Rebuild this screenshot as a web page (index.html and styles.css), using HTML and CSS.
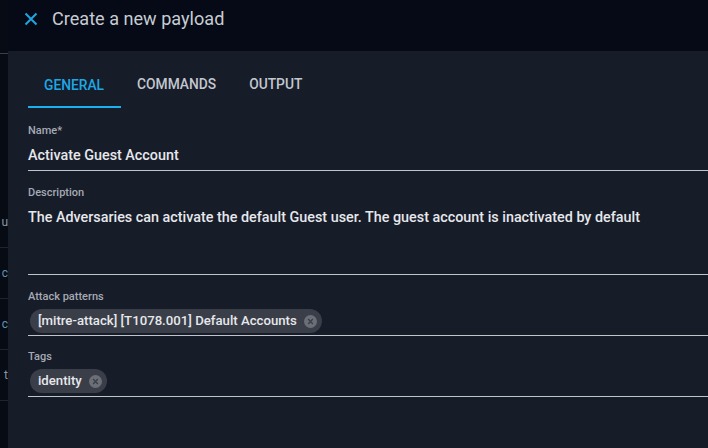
FILE: index.html
```html
<!DOCTYPE html>
<html>
<head>
<meta charset="utf-8">
<link rel="stylesheet" href="styles.css">
</head>
<body>
<div class="app">
  <aside class="behind">
    <div class="brow"></div>
    <div class="brow-gap"></div>
    <div class="brow"><span>u</span></div>
    <div class="brow"><span class="blue">c</span></div>
    <div class="brow"><span class="blue">c</span></div>
    <div class="brow"><span>t</span></div>
  </aside>
  <main class="drawer">
    <header class="head">
      <svg class="close" width="14" height="14" viewBox="0 0 14 14"><path d="M1.5 1.5L12.5 12.5M12.5 1.5L1.5 12.5" stroke="#1ea5e0" stroke-width="2" stroke-linecap="butt"/></svg>
      <h1 class="title">Create a new payload</h1>
    </header>
    <section class="content">
      <nav class="tabs">
        <div class="tab active">GENERAL</div>
        <div class="tab">COMMANDS</div>
        <div class="tab">OUTPUT</div>
      </nav>
      <div class="field">
        <label class="lbl">Name*</label>
        <div class="val">Activate Guest Account</div>
      </div>
      <div class="field">
        <label class="lbl">Description</label>
        <div class="val multi">The Adversaries can activate the default Guest user. The guest account is inactivated by default</div>
      </div>
      <div class="field">
        <label class="lbl">Attack patterns</label>
        <div class="val chips"><span class="chip">[mitre-attack] [T1078.001] Default Accounts<span class="x"><svg width="13" height="13" viewBox="0 0 12 12"><circle cx="6" cy="6" r="6" fill="#6b6f78"/><path d="M3.8 3.8L8.2 8.2M8.2 3.8L3.8 8.2" stroke="#3b3f48" stroke-width="1.3"/></svg></span></span></div>
      </div>
      <div class="field last">
        <label class="lbl">Tags</label>
        <div class="val chips"><span class="chip">identity<span class="x"><svg width="13" height="13" viewBox="0 0 12 12"><circle cx="6" cy="6" r="6" fill="#6b6f78"/><path d="M3.8 3.8L8.2 8.2M8.2 3.8L3.8 8.2" stroke="#3b3f48" stroke-width="1.3"/></svg></span></span></div>
      </div>
    </section>
  </main>
</div>
</body>
</html>
```
FILE: styles.css
```css
* { box-sizing: border-box; }
html, body { margin: 0; padding: 0; }
body {
  width: 708px; height: 448px; overflow: hidden;
  background: #171c29;
  font-family: Roboto, "Liberation Sans", sans-serif;
}
.app { display: flex; height: 448px; }
.behind {
  width: 8px; flex: none; background: #070b13; overflow: hidden;
  display: flex; flex-direction: column;
}
.brow {
  height: 51px; border-bottom: 1px solid #1f2430;
  color: #8a96a6; font-size: 12px; display: flex; align-items: center;
  justify-content: flex-end; white-space: nowrap; flex: none;
}
.brow:first-child { height: 54px; border-bottom: 1px solid #3a3f48; }
.brow-gap { height: 143px; flex: none; }
.brow span { margin-right: 0; }
.brow .blue { color: #5f93b8; }
.drawer { flex: 1; display: flex; flex-direction: column; min-width: 0; }
.head {
  height: 51px; background: #050a16; flex: none;
  display: flex; align-items: flex-start; padding: 11px 0 0 16px; gap: 14px;
}
.close { margin-top: 1px; }
.title {
  margin: 0; font-weight: 400; font-size: 18.1px; color: #c7ccd3;
  line-height: 16px; margin-top: 0;
}
.content { padding: 15px 0 0 20px; }
.tabs { display: flex; height: 42px; margin-bottom: 16px; }
.tab {
  font-size: 13.8px; color: #c3c7cf; padding: 0 16px; font-weight: 500;
  display: flex; align-items: center; height: 40px; margin-top: -2px;
}
.tab:nth-child(2) { padding-left: 16px; padding-right: 17px; }
.tab.active { color: #1ea7e5; border-bottom: 2px solid #1cb0ee; height: 42px; margin-top: 0; padding: 0 17px 2px 16px; }
.field { margin-bottom: 15px; }
.lbl { display: block; font-size: 11px; color: #a5aab3; height: 14px; line-height: 14px; font-weight: 500; }
.val {
  font-size: 14.35px; color: #e6e8ec; border-bottom: 1px solid #c0c4cb;
  height: 33px; padding-top: 10px; line-height: 16px; font-weight: 500;
}
.val.multi { height: 75px; padding-top: 10px; }
.chips { height: 32px; padding: 5px 0 0 2px; display: flex; align-items: flex-start; }
.last { margin-top: -1px; }
.last .chips { height: 33px; }
.chip {
  display: inline-flex; align-items: center; height: 24px; border-radius: 12px;
  background: #3a3e48; color: #e6e8ec; font-size: 13.2px; padding: 0 5px 0 8px;
  font-weight: 500; line-height: 16px;
}
.x { display: inline-flex; margin-left: 7px; }
```
